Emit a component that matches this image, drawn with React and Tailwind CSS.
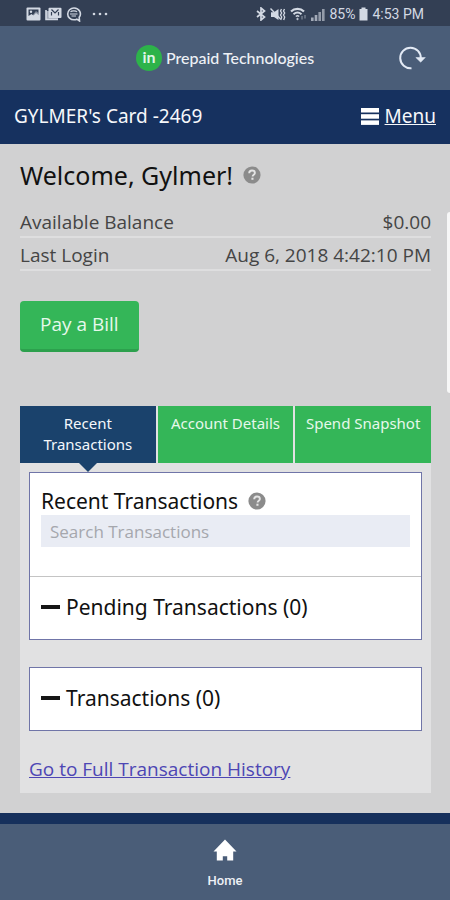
import React from 'react';

const HelpIcon = () => (
    <svg viewBox="0 0 18 18" className="h-[18px] w-[18px]" aria-hidden="true">
        <circle cx="9" cy="9" r="8.6" fill="#8b8b8b" />
        <path d="M6.2 7.2C6.2 5.4 7.4 4.5 9 4.5c1.700 0 2.900 0.900 2.900 2.400 0 1.900-2.300 1.900-2.300 3.700" fill="none" stroke="#e4e4e4" strokeWidth="1.900" />
        <rect x="8.400" y="11.700" width="2.100" height="2.100" fill="#e4e4e4" />
    </svg>
);

const StatusBar = () => {
    return (
        <div className="flex h-[26px] items-center justify-between bg-[#333f54] px-[26px] pt-[2px] text-[#d3d9e3]">
            <div className="flex items-center gap-1">
                {/* gallery */}
                <svg viewBox="0 0 15 14" className="h-[14px] w-[15px]">
                    <rect x="0.500" y="0.500" width="14" height="13" rx="1" fill="currentColor" />
                    <path d="M2.500 2.500h10v5.500l-2.500-2-2.500 2.500-2-1.500-3 2z" fill="#333f54" />
                    <circle cx="5" cy="4.800" r="1.200" fill="currentColor" />
                    <path d="M8 6.500l2-2.500 2.500 2v3H6z" fill="currentColor" opacity="0.500" />
                </svg>
                {/* mail */}
                <svg viewBox="0 0 17 14" className="h-[14px] w-[17px]">
                    <path d="M1 3v9.500h12" fill="none" stroke="currentColor" strokeWidth="1.600" />
                    <rect x="1" y="4" width="12" height="9" fill="currentColor" opacity="0.700" />
                    <rect x="3.500" y="0.700" width="13" height="10.300" rx="1" fill="currentColor" />
                    <path d="M6.500 2.500l3.500 3.500 3.500-3.500M6.500 8.500V5M13.500 8.500V5" fill="none" stroke="#333f54" strokeWidth="1.200" />
                </svg>
                {/* chat bubble */}
                <svg viewBox="0 0 16 15" className="h-[15px] w-4">
                    <path d="M8 1a6.300 5.900 0 1 0 0 11.800c1 0 2-.200 2.800-.600l2.700 1.800-.300-3.700A6.300 5.900 0 0 0 8 1z" fill="none" stroke="currentColor" strokeWidth="1.600" />
                    <path d="M4 7h7.500M4.500 5C5.500 3.500 10 3.500 11 5M5.500 9h4.500" fill="none" stroke="currentColor" strokeWidth="1.100" />
                </svg>
                <svg viewBox="0 0 18 4" className="ml-[5px] h-1 w-[18px]" fill="currentColor">
                    <circle cx="3" cy="2" r="1.300" />
                    <circle cx="9" cy="2" r="1.300" />
                    <circle cx="15" cy="2" r="1.300" />
                </svg>
            </div>

            <div className="flex items-center gap-1">
                {/* bluetooth */}
                <svg viewBox="0 0 10 14" className="h-[14px] w-[10px]" fill="none" stroke="currentColor" strokeWidth="1.700">
                    <path d="M1 4l7.500 6L5 13V1l3.500 3L1 10" />
                </svg>
                {/* muted, vibrate */}
                <svg viewBox="0 0 16 13" className="h-[13px] w-4">
                    <path d="M1 4.200h3L8.500 1v11L4 9H1z" fill="currentColor" />
                    <path d="M0.500 0.500l10 10.500" stroke="currentColor" strokeWidth="1.400" />
                    <path d="M11.500 1l-1 2 1.200 2-1.200 2 1.200 2-1 3M14.500 1l-1 2 1.200 2-1.200 2 1.200 2-1 3" fill="none" stroke="currentColor" strokeWidth="1.300" />
                </svg>
                {/* wifi */}
                <svg viewBox="0 0 17 14" className="h-[14px] w-[17px]" fill="none" stroke="currentColor">
                    <path d="M1 4.500C4.500 1 10.500 1 14 4.500" strokeWidth="2.200" />
                    <path d="M3.500 7.200C6 5 9 5 11.500 7.200" strokeWidth="1.900" />
                    <path d="M5.800 9.500c1.200-1 2.200-1 3.400 0" strokeWidth="1.500" />
                    <circle cx="7.500" cy="12" r="0.800" fill="currentColor" strokeWidth="0.600" />
                    <path d="M12 9v3.500M15 8v3.500" strokeWidth="1" opacity="0.600" />
                </svg>
                {/* signal */}
                <svg viewBox="0 0 14 13" className="h-[13px] w-[14px]" fill="currentColor">
                    <rect x="0" y="9.500" width="2.600" height="3.500" opacity="0.700" />
                    <rect x="3.700" y="7" width="2.600" height="6" opacity="0.700" />
                    <rect x="7.400" y="4" width="2.600" height="9" opacity="0.600" />
                    <rect x="11" y="1" width="2.600" height="12" opacity="0.600" />
                </svg>
                <span className="font-[Roboto,sans-serif] text-[14px] leading-4">85%</span>
                <svg viewBox="0 0 9 14" className="h-[14px] w-[9px]" fill="currentColor">
                    <path d="M2.500 0.500h4v1.500H8.500v11.500h-8V2h2z" />
                </svg>
                <span className="font-[Roboto,sans-serif] text-[14px] leading-4">4:53 PM</span>
            </div>
        </div>
    );
};

const AppHeader = () => {
    return (
        <header className="relative flex h-16 items-center justify-center bg-[#4a5d78]">
            <div className="flex items-center gap-1">
                <svg viewBox="0 0 26 26" className="h-[26px] w-[26px]">
                    <circle cx="13" cy="13" r="13" fill="#2db34a" />
                    <text x="13" y="18" textAnchor="middle" fontFamily="Lato, sans-serif" fontSize="16" fontWeight="700" fill="#dff5e6">in</text>
                </svg>
                <span className="font-[Lato,sans-serif] text-[16px] leading-5 font-medium text-[#eef1f6]">Prepaid Technologies</span>
            </div>
            <button type="button" aria-label="Refresh" className="absolute right-6 text-[#e3eaf5]">
                <svg viewBox="0 0 28 24" className="h-6 w-7" fill="none" stroke="currentColor" strokeWidth="2">
                    <path d="M13.500 22.200A10.300 10.300 0 1 1 22.800 12.500" />
                    <path d="M17.800 11.500h9.500l-4.600 4.700z" fill="currentColor" strokeWidth="0.500" />
                </svg>
            </button>
        </header>
    );
};

const CardBar = () => {
    return (
        <nav className="flex h-[54px] items-center justify-between bg-[#16315f] px-[14px] pb-[2px] font-['Noto_Sans',sans-serif] text-[19px] leading-6 text-[#f6f8fb]">
            <span>GYLMER's Card -2469</span>
            <a href="#" className="flex items-center gap-[6px]">
                <svg viewBox="0 0 18 17" className="h-[17px] w-[18px]" fill="#ffffff">
                    <rect width="18" height="4.500" />
                    <rect y="6.200" width="18" height="4.500" />
                    <rect y="12.400" width="18" height="4.500" />
                </svg>
                <span className="underline">Menu</span>
            </a>
        </nav>
    );
};

const Minus = () => <span className="h-[4px] w-[19px] bg-[#161616]"></span>;

const App = () => {
    return (
        <div className="flex min-h-screen flex-col bg-[#d1d1d2] font-['Open_Sans',sans-serif]">
            <StatusBar />
            <AppHeader />
            <CardBar />

            <main className="relative flex-1 pr-[19px] pb-5 pl-5">
                <div className="absolute right-0 top-[68px] h-[181px] w-[3px] rounded-l bg-[#f7f7f7]"></div>

                <div className="flex items-center gap-[10px] pt-[15px]">
                    <h1 className="font-['Noto_Sans',sans-serif] text-[25px] leading-8 text-[#111111]">Welcome, Gylmer!</h1>
                    <button type="button" aria-label="Help"><HelpIcon /></button>
                </div>

                <dl className="mt-[14px] text-[19px] leading-7 text-[#454545]">
                    <div className="flex h-[33px] items-center justify-between border-b-2 border-[#dededf] pt-[2px]">
                        <dt>Available Balance</dt>
                        <dd>$0.00</dd>
                    </div>
                    <div className="flex h-[33px] items-center justify-between border-b-2 border-[#dededf] pt-[2px]">
                        <dt>Last Login</dt>
                        <dd>Aug 6, 2018 4:42:10 PM</dd>
                    </div>
                </dl>

                <button type="button" className="mt-[30px] block h-[51px] rounded-sm border-b-3 border-[#2ca04d] bg-[#34b658] px-5 pb-[2px] text-[19px] leading-6 text-[#e6f8eb]">
                    Pay a Bill
                </button>

                <div className="mt-[54px] bg-[#e1e1e2]">
                    <div className="grid grid-cols-3 gap-[2px] font-['Noto_Sans',sans-serif] text-[15px] leading-[21px] text-[#e6f8eb]">
                        <button type="button" className="relative flex h-[57px] items-start justify-center bg-[#1a426c] px-2 pt-[7px] text-[#f4f7fb]">
                            Recent Transactions
                            <svg viewBox="0 0 18 9" className="absolute top-full h-[9px] w-[18px]">
                                <path d="M0 0h18L9 9z" fill="#1a426c" />
                            </svg>
                        </button>
                        <button type="button" className="flex h-[57px] items-start justify-center bg-[#34b658] pt-[7px]">Account Details</button>
                        <button type="button" className="flex h-[57px] items-start justify-center bg-[#34b658] pt-[7px]">Spend Snapshot</button>
                    </div>

                    <div className="px-[9px] pt-[9px] pb-[10px]">
                        <section className="border border-[#7075a8] bg-white text-[#111111]">
                            <div className="h-[104px] border-b border-[#c4c4c4] px-[11px] pt-[14px]">
                                <div className="flex items-center gap-[10px]">
                                    <h2 className="font-['Noto_Sans',sans-serif] text-[21px] leading-7">Recent Transactions</h2>
                                    <button type="button" aria-label="Help"><HelpIcon /></button>
                                </div>
                                <input
                                    type="text"
                                    aria-label="Search Transactions"
                                    placeholder="Search Transactions"
                                    className="block h-8 w-full bg-[#e9ecf4] px-[9px] text-[17px] leading-6 placeholder:text-[#a5a7ad]"
                                />
                            </div>
                            <div className="flex h-[62px] items-center gap-[6px] px-[11px] pb-[2px] font-['Noto_Sans',sans-serif] text-[21px] leading-7">
                                <Minus />
                                <h2>Pending Transactions (0)</h2>
                            </div>
                        </section>

                        <section className="mt-[27px] flex h-16 items-center gap-[6px] border border-[#7075a8] bg-white px-[11px] pb-[2px] font-['Noto_Sans',sans-serif] text-[21px] leading-7 text-[#111111]">
                            <Minus />
                            <h2>Transactions (0)</h2>
                        </section>

                        <a href="#" className="mt-6 block text-[19px] leading-7 text-[#4d46b4] underline">Go to Full Transaction History</a>
                    </div>
                </div>
            </main>

            <footer className="h-[87px] border-t-[11px] border-[#16305c] bg-[#4a5d78]">
                <a href="#" className="flex flex-col items-center gap-[10px] pt-[15px] text-[#eef1f6]">
                    <svg viewBox="0 0 24 22" className="h-[22px] w-6" fill="#ffffff">
                        <path d="M12 0.500L0.500 12.500h3.300V21.500h6v-4.200h4.400v4.200h6V12.500h3.300z" />
                    </svg>
                    <span className="font-[Roboto,sans-serif] text-[13px] leading-5 font-medium">Home</span>
                </a>
            </footer>
        </div>
    );
};

export default App;
